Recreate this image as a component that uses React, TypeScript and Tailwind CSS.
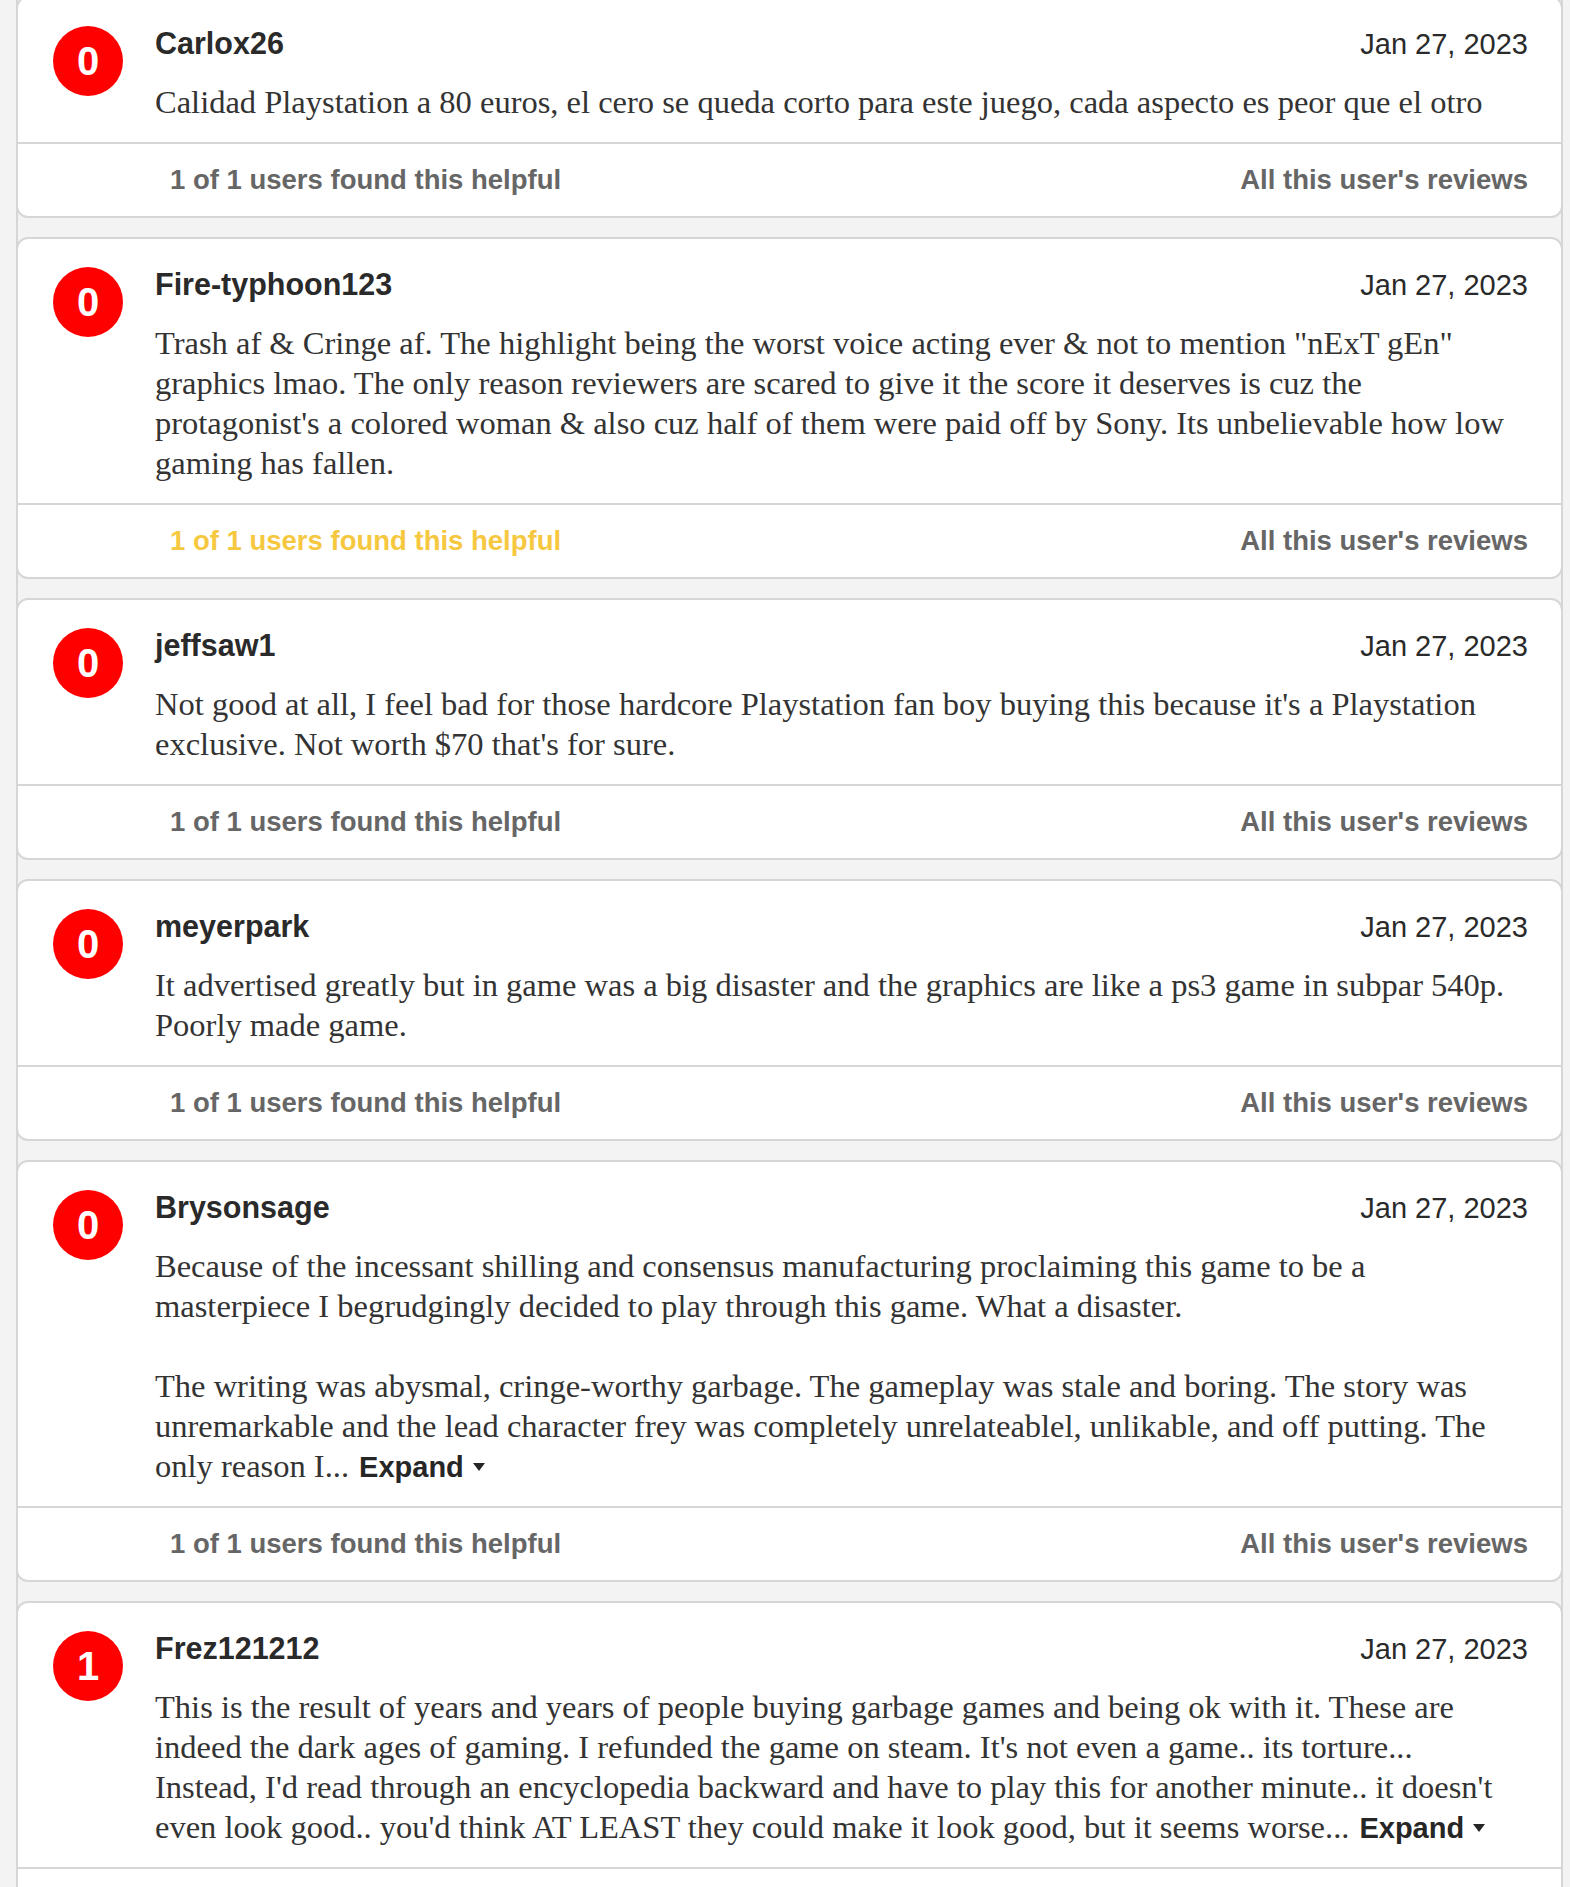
import { Fragment } from 'react'

type Review = {
  user: string
  score: number
  date: string
  lines: string[]
  expand?: boolean
  helpfulActive?: boolean
}

const reviews: Review[] = [
  {
    user: 'Carlox26',
    score: 0,
    date: 'Jan 27, 2023',
    lines: [
      'Calidad Playstation a 80 euros, el cero se queda corto para este juego, cada aspecto es peor que el otro',
    ],
  },
  {
    user: 'Fire-typhoon123',
    score: 0,
    date: 'Jan 27, 2023',
    helpfulActive: true,
    lines: [
      'Trash af & Cringe af. The highlight being the worst voice acting ever & not to mention "nExT gEn"',
      'graphics lmao. The only reason reviewers are scared to give it the score it deserves is cuz the',
      "protagonist's a colored woman & also cuz half of them were paid off by Sony. Its unbelievable how low",
      'gaming has fallen.',
    ],
  },
  {
    user: 'jeffsaw1',
    score: 0,
    date: 'Jan 27, 2023',
    lines: [
      "Not good at all, I feel bad for those hardcore Playstation fan boy buying this because it's a Playstation",
      "exclusive. Not worth $70 that's for sure.",
    ],
  },
  {
    user: 'meyerpark',
    score: 0,
    date: 'Jan 27, 2023',
    lines: [
      'It advertised greatly but in game was a big disaster and the graphics are like a ps3 game in subpar 540p.',
      'Poorly made game.',
    ],
  },
  {
    user: 'Brysonsage',
    score: 0,
    date: 'Jan 27, 2023',
    expand: true,
    lines: [
      'Because of the incessant shilling and consensus manufacturing proclaiming this game to be a',
      'masterpiece I begrudgingly decided to play through this game. What a disaster.',
      '',
      'The writing was abysmal, cringe-worthy garbage. The gameplay was stale and boring. The story was',
      'unremarkable and the lead character frey was completely unrelateablel, unlikable, and off putting. The',
      'only reason I...',
    ],
  },
  {
    user: 'Frez121212',
    score: 1,
    date: 'Jan 27, 2023',
    expand: true,
    lines: [
      'This is the result of years and years of people buying garbage games and being ok with it. These are',
      "indeed the dark ages of gaming. I refunded the game on steam. It's not even a game.. its torture...",
      "Instead, I'd read through an encyclopedia backward and have to play this for another minute.. it doesn't",
      "even look good.. you'd think AT LEAST they could make it look good, but it seems worse...",
    ],
  },
]

function ReviewCard({ r, first }: { r: Review; first?: boolean }) {
  return (
    <div
      className={`-mx-[2px] rounded-[12px] border-2 border-[#d6d6d6] bg-white ${
        first ? '-mt-[4px]' : 'mt-[19px]'
      }`}
    >
      <div className="flex pl-[35px] pr-[33px] pt-[27px] pb-[20px]">
        <div className="mt-[1px] flex h-[70px] w-[70px] shrink-0 items-center justify-center rounded-full bg-[#f00] text-[40px] font-bold text-white">
          {r.score}
        </div>
        <div className="ml-[32px] min-w-0 flex-1">
          <div className="flex items-baseline justify-between">
            <span className="text-[30.5px] font-bold leading-[36px] text-[#2a2a2a]">{r.user}</span>
            <span className="text-[29px] leading-[36px] text-[#2a2a2a]">{r.date}</span>
          </div>
          <p className="mt-[20px] whitespace-nowrap font-['Liberation_Serif',serif] text-[32.5px] leading-[40px] text-[#333]">
            {r.lines.map((line, i) => (
              <Fragment key={i}>
                {line}
                {i < r.lines.length - 1 && <br />}
              </Fragment>
            ))}
            {r.expand && (
              <span className="ml-[10px] inline-flex items-center font-['Liberation_Sans',Arial,sans-serif] text-[29px] font-bold leading-[36px] text-[#262626]">
                Expand
                <svg width="12" height="8" viewBox="0 0 12 8" className="ml-[9px]">
                  <path d="M0 0h12L6 8z" fill="#262626" />
                </svg>
              </span>
            )}
          </p>
        </div>
      </div>
      <div className="h-[2px] bg-[#d6d6d6]" />
      <div className="flex h-[72px] items-center justify-between pl-[152px] pr-[33px] text-[27.5px] font-bold">
        <span className={r.helpfulActive ? 'text-[#f5c83f]' : 'text-[#666]'}>
          1 of 1 users found this helpful
        </span>
        <span className="text-[#666]">All this user's reviews</span>
      </div>
    </div>
  )
}

export default function App() {
  return (
    <div className="min-h-screen overflow-hidden bg-[#f3f3f3] font-['Liberation_Sans',Arial,sans-serif]">
      <div className="ml-[16px] w-[1547px] border-x-2 border-[#d6d6d6] pb-[40px]">
        {reviews.map((r, i) => (
          <ReviewCard key={r.user} r={r} first={i === 0} />
        ))}
      </div>
    </div>
  )
}
